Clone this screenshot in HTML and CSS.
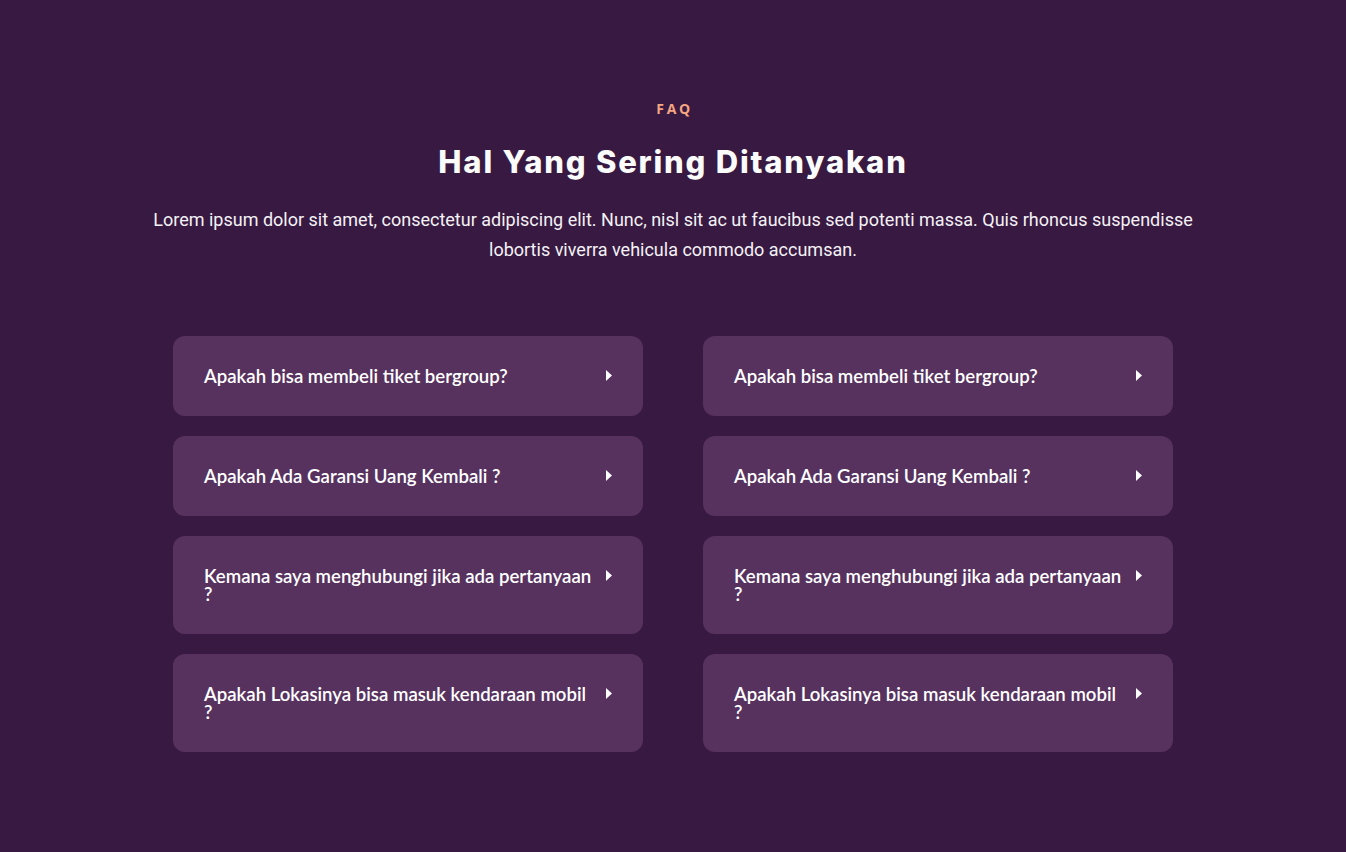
FILE: index.html
```html
<!DOCTYPE html>
<html lang="id">
<head>
<meta charset="utf-8">
<title>FAQ</title>
<link rel="stylesheet" href="styles.css">
</head>
<body>
<section class="faq">
  <div class="faq-label">FAQ</div>
  <h2 class="faq-title">Hal Yang Sering Ditanyakan</h2>
  <p class="faq-desc">Lorem ipsum dolor sit amet, consectetur adipiscing elit. Nunc, nisl sit ac ut faucibus sed potenti massa. Quis rhoncus suspendisse lobortis viverra vehicula commodo accumsan.</p>
  <div class="faq-grid">
    <div class="faq-item"><span class="q">Apakah bisa membeli tiket bergroup?</span><svg class="caret" viewBox="0 0 6 11"><path d="M0 0L6 5.5L0 11Z"/></svg></div>
    <div class="faq-item"><span class="q">Apakah bisa membeli tiket bergroup?</span><svg class="caret" viewBox="0 0 6 11"><path d="M0 0L6 5.5L0 11Z"/></svg></div>
    <div class="faq-item"><span class="q">Apakah Ada Garansi Uang Kembali ?</span><svg class="caret" viewBox="0 0 6 11"><path d="M0 0L6 5.5L0 11Z"/></svg></div>
    <div class="faq-item"><span class="q">Apakah Ada Garansi Uang Kembali ?</span><svg class="caret" viewBox="0 0 6 11"><path d="M0 0L6 5.5L0 11Z"/></svg></div>
    <div class="faq-item"><span class="q">Kemana saya menghubungi jika ada pertanyaan ?</span><svg class="caret" viewBox="0 0 6 11"><path d="M0 0L6 5.5L0 11Z"/></svg></div>
    <div class="faq-item"><span class="q">Kemana saya menghubungi jika ada pertanyaan ?</span><svg class="caret" viewBox="0 0 6 11"><path d="M0 0L6 5.5L0 11Z"/></svg></div>
    <div class="faq-item"><span class="q">Apakah Lokasinya bisa masuk kendaraan mobil ?</span><svg class="caret" viewBox="0 0 6 11"><path d="M0 0L6 5.5L0 11Z"/></svg></div>
    <div class="faq-item"><span class="q">Apakah Lokasinya bisa masuk kendaraan mobil ?</span><svg class="caret" viewBox="0 0 6 11"><path d="M0 0L6 5.5L0 11Z"/></svg></div>
  </div>
</section>
</body>
</html>
```

FILE: styles.css
```css
html, body {
  margin: 0;
  padding: 0;
  background: #381941;
  height: 100%;
}
.faq {
  display: flex;
  flex-direction: column;
  align-items: center;
  padding-top: 99px;
  color: #f7f5fa;
}
.faq-label {
  font-family: "Open Sans", "Noto Sans", sans-serif;
  font-weight: 700;
  font-size: 14px;
  line-height: 20px;
  letter-spacing: 2.6px;
  color: #f4a682;
  padding-left: 3px;
}
.faq-title {
  margin: 23px 0 0;
  font-family: "Inter", "Noto Sans", sans-serif;
  font-weight: 800;
  font-size: 31px;
  line-height: 40px;
  letter-spacing: 1.8px;
  color: #fbfbfb;
}
.faq-desc {
  margin: 23px 0 0;
  max-width: 1050px;
  text-align: center;
  font-family: "Roboto", sans-serif;
  font-size: 18px;
  line-height: 30px;
  color: #f4f2f6;
}
.faq-grid {
  margin-top: 71px;
  width: 1000px;
  display: grid;
  grid-template-columns: 470px 470px;
  column-gap: 60px;
  row-gap: 20px;
  align-items: start;
}
.faq-item {
  background: #57325f;
  border-radius: 12px;
  padding: 31px 31px 31px 31px;
  display: flex;
  align-items: flex-start;
  justify-content: space-between;
  gap: 10px;
}
.q {
  font-family: "Lato", "Noto Sans", sans-serif;
  font-weight: 600;
  font-size: 18.6px;
  line-height: 18px;
  color: #ffffff;
}
.caret {
  flex: none;
  width: 6px;
  height: 11px;
  margin-top: 3px;
  fill: #ffffff;
}
```
